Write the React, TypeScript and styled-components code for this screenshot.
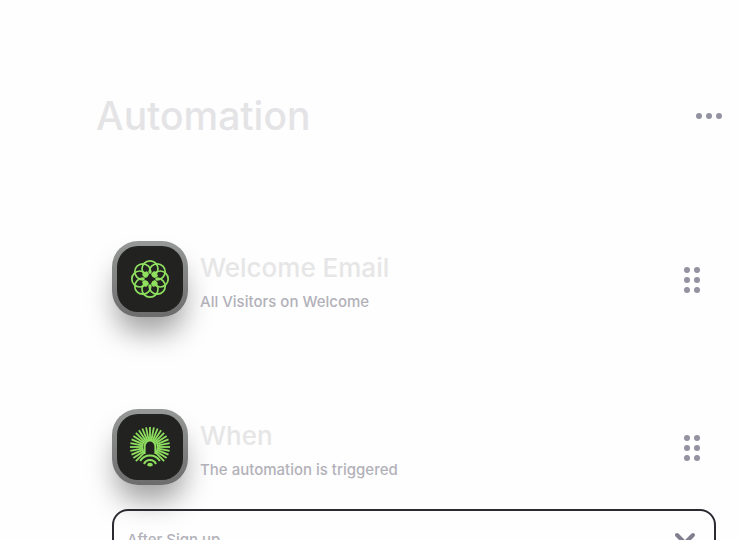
import React from "react";
import styled, { createGlobalStyle } from "styled-components";

const GlobalStyle = createGlobalStyle`
  * { box-sizing: border-box; }
  body {
    margin: 0;
    background: #fefefe;
    font-family: Inter, "Liberation Sans", sans-serif;
    -webkit-font-smoothing: antialiased;
  }
`;

const Page = styled.main`
  padding: 88px 16px 32px 96px;
`;

const Header = styled.header`
  display: flex;
  align-items: center;
  justify-content: space-between;
  height: 56px;
`;

const Title = styled.h1`
  margin: 0;
  font-size: 39px;
  line-height: 56px;
  font-weight: 500;
  color: #e4e4e6;
`;

const IconButton = styled.button`
  display: flex;
  padding: 0;
  border: 0;
  background: none;
  color: #9392a0;
  cursor: pointer;
`;

const Steps = styled.section`
  display: flex;
  flex-direction: column;
  gap: 92px;
  padding: 97px 7px 0 16px;
`;

const Step = styled.article`
  display: flex;
  flex-direction: column;
  gap: 24px;
`;

const StepRow = styled.div`
  display: flex;
  align-items: center;
  gap: 12px;
  height: 76px;
  padding-right: 16px;
`;

const Tile = styled.div`
  display: grid;
  place-items: center;
  flex: none;
  width: 76px;
  height: 76px;
  border: 5px solid transparent;
  border-radius: 26px;
  background:
    linear-gradient(#222321, #222321) padding-box,
    linear-gradient(#969997, #6c6c6c) border-box;
  box-shadow: 0 20px 28px -4px rgba(0, 0, 0, 0.36);
`;

const StepText = styled.div`
  flex: 1;
  padding-top: 6px;
`;

const StepTitle = styled.h2`
  margin: 0;
  font-size: 26px;
  line-height: 40px;
  font-weight: 500;
  color: #e6e6e7;
`;

const StepNote = styled.p`
  margin: 0;
  font-size: 15px;
  line-height: 28px;
  font-weight: 500;
  color: #b2b1b9;
`;

const SelectBox = styled.label`
  display: grid;
  align-items: center;
  height: 60px;
  border: 2px solid #2b2a31;
  border-radius: 16px;
`;

const Select = styled.select`
  grid-area: 1 / 1;
  width: 100%;
  height: 56px;
  padding: 0 48px 0 13px;
  border: 0;
  appearance: none;
  background: none;
  font-family: inherit;
  font-size: 15px;
  font-weight: 500;
  color: #b2b1b9;
`;

const Chevron = styled.svg`
  grid-area: 1 / 1;
  justify-self: end;
  margin-right: 18px;
  pointer-events: none;
`;

const MoreDots = () => (
  <svg width="28" height="8" viewBox="0 0 28 8" fill="currentColor" aria-hidden="true">
    {[4, 14, 24].map((x) => <circle key={x} cx={x} cy="4" r="3" />)}
  </svg>
);

const DragDots = () => (
  <svg width="16" height="28" viewBox="0 0 16 28" fill="currentColor" aria-hidden="true">
    {[5, 15, 25].map((y) => [3, 13].map((x) => <circle key={`${x}-${y}`} cx={x} cy={y} r="3" />))}
  </svg>
);

const RosetteIcon = () => (
  <svg width="42" height="42" viewBox="-21 -21 42 42" fill="none" stroke="#8fe05f" strokeWidth="1.7" aria-hidden="true">
    {Array.from({ length: 8 }, (_, i) => (
      <circle key={i} cx="0" cy="-10.2" r="8" transform={`rotate(${i * 45})`} />
    ))}
    <circle r="5.5" fill="#222321" stroke="none" />
    {[0, 90, 180, 270].map((a) => (
      <path key={a} d="M1-4.8Q1.8-1.8 4.8-1L7.6-2.6Q8.5-4.6 6.2-5.2Q6.5-8.4 3.2-7.4Z" fill="#8fe05f" stroke="none" transform={`rotate(${a})`} />
    ))}
  </svg>
);

const rays = Array.from({ length: 25 }, (_, i) => -135 + i * 11.25);

const SunriseIcon = () => (
  <svg width="42" height="42" viewBox="-21 -21 42 42" fill="none" stroke="#8fe05f" aria-hidden="true">
    {rays.map((a) => (
      <path key={a} d="M0-7V-20" strokeWidth="1.8" transform={`rotate(${a})`} />
    ))}
    <path d="M-5.4 7V-1A5.4 5.4 0 0 1 5.4-1V7" strokeWidth="2" fill="#222321" />
    <path d="M-11 14A13 13 0 0 1 11 14V20H-11Z" fill="#222321" stroke="none" />
    <path d="M-9.8 14A11.5 11.5 0 0 1 9.8 14M-6 17A6.5 6.5 0 0 1 6 17" strokeWidth="2" />
    <path d="M-2.8 18.6A2.8 2.8 0 0 1 2.8 18.6Q0 20.4-2.8 18.6Z" fill="#8fe05f" stroke="none" />
  </svg>
);

interface StepHeadProps {
  icon: React.ReactNode;
  title: string;
  note: string;
}

const StepHead = ({ icon, title, note }: StepHeadProps) => (
  <StepRow>
    <Tile>{icon}</Tile>
    <StepText>
      <StepTitle>{title}</StepTitle>
      <StepNote>{note}</StepNote>
    </StepText>
    <IconButton type="button" aria-label={`Reorder ${title}`}><DragDots /></IconButton>
  </StepRow>
);

export default function App() {
  return (
    <>
      <GlobalStyle />
      <Page>
        <Header>
          <Title>Automation</Title>
          <IconButton type="button" aria-label="More options"><MoreDots /></IconButton>
        </Header>
        <Steps>
          <Step>
            <StepHead icon={<RosetteIcon />} title="Welcome Email" note="All Visitors on Welcome" />
          </Step>
          <Step>
            <StepHead icon={<SunriseIcon />} title="When" note="The automation is triggered" />
            <SelectBox>
              <Select aria-label="Trigger" defaultValue="signup">
                <option value="signup">After Sign up</option>
              </Select>
              <Chevron width="22" height="14" viewBox="0 0 22 14" fill="none" stroke="#817f8e" strokeWidth="4" strokeLinecap="round" strokeLinejoin="round" aria-hidden="true">
                <path d="M3 3L11 11L19 3" />
              </Chevron>
            </SelectBox>
          </Step>
        </Steps>
      </Page>
    </>
  );
}
